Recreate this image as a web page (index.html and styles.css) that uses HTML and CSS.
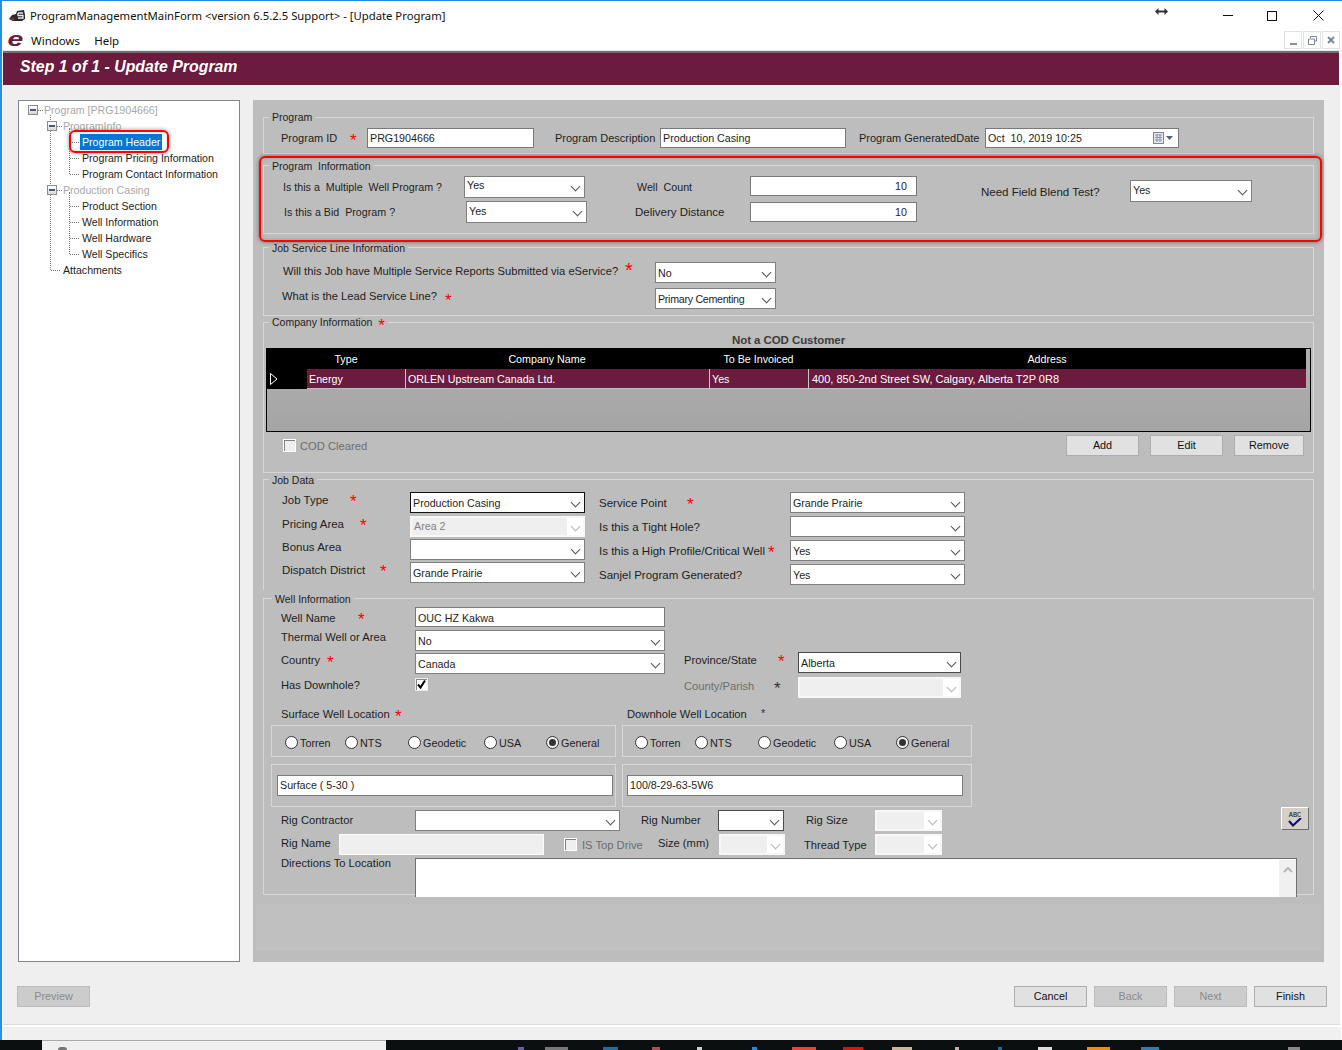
FILE: index.html
```html
<!DOCTYPE html>
<html lang="en">
<head>
<meta charset="utf-8">
<title>ProgramManagementMainForm</title>
<link rel="stylesheet" href="styles.css">
</head>
<body>
<div class="window">
  <header class="titlebar">
    <svg class="app-icon" width="17" height="12" viewBox="0 0 17 12"><path d="M0 9 L3 5 L7 4 L8 1 L15 0 L16 5 L16 9 L13 11 L4 11 Z" fill="#2b2b2b"/><path d="M9 3h5M9 3v2.500h5v2.500h-5" stroke="#e8e8e8" stroke-width="1.300" fill="none"/><circle cx="4" cy="9" r="1.800" fill="#7a2a4a"/></svg>
    <span class="title-text">ProgramManagementMainForm &lt;version 6.5.2.5 Support&gt; - [Update Program]</span>
    <svg class="resize-cursor" width="13" height="7" viewBox="0 0 13 7"><path d="M0 3.500 L3.500 0 V2.500 H9.500 V0 L13 3.500 L9.500 7 V4.500 H3.500 V7 Z" fill="#333"/></svg>
    <svg class="win-min" width="10" height="1" viewBox="0 0 10 1"><rect width="10" height="1" fill="#111"/></svg>
    <svg class="win-max" width="10" height="10" viewBox="0 0 10 10"><rect x=".5" y=".5" width="9" height="9" fill="none" stroke="#111"/></svg>
    <svg class="win-close" width="11" height="11" viewBox="0 0 11 11"><path d="M.5 .5 L10.500 10.500 M10.500 .5 L.5 10.500" stroke="#111"/></svg>
  </header>
  <nav class="menubar">
    <span class="logo-e">e</span>
    <span class="menu-item">Windows</span>
    <span class="menu-item">Help</span>
    <div class="mdi-buttons">
      <span class="mdi-btn"><svg width="7" height="2"><rect width="7" height="2" fill="#8a94a0"/></svg></span>
      <span class="mdi-btn"><svg width="9" height="9" viewBox="0 0 9 9"><path d="M2.500 2V.5h6v4.500H6.500M.5 3h6v5.500h-6z" fill="none" stroke="#7b8794"/></svg></span>
      <span class="mdi-btn"><svg width="8" height="8" viewBox="0 0 8 8"><path d="M1 1L7 7M7 1L1 7" stroke="#7b8794" stroke-width="2"/></svg></span>
    </div>
  </nav>
  <div class="step-band">Step 1 of 1 - Update Program</div>
  <main class="main">
    <div class="work">
      <aside class="tree">
        <div class="tree-row t0"><span class="exp"></span><span class="stub"></span><span class="muted">Program [PRG1904666]</span></div>
        <ul class="branch b1">
          <li>
            <div class="tree-row t1"><span class="exp"></span><span class="stub"></span><span class="muted">ProgramInfo</span></div>
            <ul class="branch b2 short">
              <li class="tree-row t2"><span class="stub long"></span><span class="selected">Program Header</span></li>
              <li class="tree-row t2"><span class="stub long"></span><span class="node">Program Pricing Information</span></li>
              <li class="tree-row t2"><span class="stub long"></span><span class="node">Program Contact Information</span></li>
            </ul>
          </li>
          <li>
            <div class="tree-row t1"><span class="exp"></span><span class="stub"></span><span class="muted">Production Casing</span></div>
            <ul class="branch b2 tall">
              <li class="tree-row t2"><span class="stub long"></span><span class="node">Product Section</span></li>
              <li class="tree-row t2"><span class="stub long"></span><span class="node">Well Information</span></li>
              <li class="tree-row t2"><span class="stub long"></span><span class="node">Well Hardware</span></li>
              <li class="tree-row t2"><span class="stub long"></span><span class="node">Well Specifics</span></li>
            </ul>
          </li>
          <li class="tree-row t1 plain"><span class="stub wide"></span><span class="node">Attachments</span></li>
        </ul>
        <div class="mark mark-tree"></div>
      </aside>

      <section class="form">
        <fieldset class="group high f-11 h-43">
          <legend>Program</legend>
          <div class="row pt-5 pl-17">
            <span class="w-69">Program ID</span><span class="star w-17">*</span>
            <div class="input w-167">PRG1904666</div>
            <span class="w-105 ml-21">Program Description</span>
            <div class="input w-186">Production Casing</div>
            <span class="w-126 ml-13">Program GeneratedDate</span>
            <div class="input date w-194"><span class="grow">Oct&nbsp; 10, 2019 10:25</span>
              <svg width="20" height="12" viewBox="0 0 20 12"><rect x=".5" y=".5" width="10" height="11" fill="#e4e8ee" stroke="#7e8a99"/><path d="M2 3h7M2 5.500h7M2 8h7M4 2v8M7 2v8" stroke="#8f99a6"/><path d="M13 4h7l-3.500 4z" fill="#50617c"/></svg>
            </div>
          </div>
        </fieldset>

        <fieldset class="group h-75 mt-5">
          <legend>Program&nbsp; Information</legend>
          <div class="row-top pt-5">
            <div>
              <div class="row pl-19">
                <span class="w-181 f-107">Is this a&nbsp; Multiple&nbsp; Well Program ?</span>
                <div class="select w-121 h-22 text-high"><span class="grow">Yes</span></div>
                <span class="w-113 ml-52 f-107">Well&nbsp; Count</span>
                <div class="input num w-167 self-start">10</div>
              </div>
              <div class="row pl-20 mt-3">
                <span class="w-182 f-107">Is this a&nbsp;Bid&nbsp; Program ?</span>
                <div class="select w-121 h-22 text-mid"><span class="grow">Yes</span></div>
                <span class="w-115 ml-48">Delivery Distance</span>
                <div class="input num w-167">10</div>
              </div>
            </div>
            <div class="row ml-64 mt-4">
              <span class="w-149 down">Need Field Blend Test?</span>
              <div class="select w-122 h-22 text-mid"><span class="grow">Yes</span></div>
            </div>
          </div>
        </fieldset>

        <fieldset class="group f-112 h-75 mt-7">
          <legend>Job Service Line Information</legend>
          <div class="row pt-9 pl-19">
            <span class="w-341 up-2">Will this Job have Multiple Service Reports Submitted via eService?</span><span class="star big w-31">*</span>
            <div class="select w-121"><span class="grow">No</span></div>
          </div>
          <div class="row pl-18 mt-5">
            <span class="w-163 up-3">What is the Lead Service Line?</span><span class="star w-210">*</span>
            <div class="select w-121"><span class="grow condensed">Primary Cementing</span></div>
          </div>
        </fieldset>

        <fieldset class="group high h-157">
          <legend>Company Information &nbsp;<span class="star legend-star">*</span></legend>
          <div class="cod-note">Not a COD Customer</div>
          <div class="grid-box">
            <div class="data-grid">
              <div class="gh corner"></div>
              <div class="gh pr-20">Type</div>
              <div class="gh pr-20">Company Name</div>
              <div class="gh">To Be Invoiced</div>
              <div class="gh pr-20">Address</div>
              <div class="row-head"><svg width="8" height="12" viewBox="0 0 8 12"><path d="M.5 .5 L7 6 L.5 11.500 Z" fill="#000" stroke="#fff"/></svg></div>
              <div class="gc">Energy</div>
              <div class="gc">ORLEN Upstream Canada Ltd.</div>
              <div class="gc">Yes</div>
              <div class="gc wide-text">400, 850-2nd Street SW, Calgary, Alberta T2P 0R8</div>
            </div>
          </div>
          <div class="row mt-3 pl-19 pr-9">
            <span class="check dim"></span>
            <span class="grey f-112 ml-4">COD Cleared</span>
            <div class="btn-row">
              <button class="btn">Add</button>
              <button class="btn">Edit</button>
              <button class="btn narrow">Remove</button>
            </div>
          </div>
        </fieldset>

        <fieldset class="group open h-117">
          <legend>Job Data</legend>
          <div class="row-top pt-7">
            <div class="col-left">
              <div class="row-top h-21"><span class="w-68 lift">Job Type</span><span class="star lift w-60">*</span><div class="select strong w-175"><span class="grow">Production Casing</span></div></div>
              <div class="row-top h-21 mt-3"><span class="w-78 lift">Pricing Area</span><span class="star lift w-50">*</span><div class="select dis w-175"><span class="grow">Area 2</span></div></div>
              <div class="row-top h-21 mt-2"><span class="w-128 lift">Bonus Area</span><div class="select w-175"><span class="grow"></span></div></div>
              <div class="row-top h-21 mt-2"><span class="w-98 lift">Dispatch District</span><span class="star lift w-30">*</span><div class="select w-175"><span class="grow">Grande Prairie</span></div></div>
            </div>
            <div class="ml-14">
              <div class="row h-21"><span class="w-88">Service Point</span><span class="star w-103">*</span><div class="select w-175"><span class="grow">Grande Prairie</span></div></div>
              <div class="row h-21 mt-3"><span class="w-191">Is this a Tight Hole?</span><div class="select w-175"><span class="grow"></span></div></div>
              <div class="row h-21 mt-3"><span class="w-169">Is this a High Profile/Critical Well</span><span class="star w-22">*</span><div class="select w-175"><span class="grow">Yes</span></div></div>
              <div class="row h-21 mt-3"><span class="w-191">Sanjel Program Generated?</span><div class="select w-175"><span class="grow">Yes</span></div></div>
            </div>
          </div>
        </fieldset>

        <fieldset class="group well f-112 h-303 mt-2">
          <legend>Well Information</legend>
          <div class="row-top">
            <div class="col-well">
              <div class="row mt-3"><span class="w-77 down">Well Name</span><span class="star w-57">*</span><div class="input low w-250">OUC HZ Kakwa</div></div>
              <div class="row-top h-21 mt-3"><span class="w-134 lift">Thermal Well or Area</span><div class="select w-250"><span class="grow">No</span></div></div>
              <div class="row-top h-21 mt-2"><span class="w-46 lift">Country</span><span class="star lift w-88">*</span><div class="select w-250"><span class="grow">Canada</span></div></div>
              <div class="row mt-4"><span class="w-134">Has Downhole?</span><span class="check checked"><svg width="11" height="11" viewBox="0 0 11 11"><path d="M2 5.500 L4.500 8.500 L9 1.500" fill="none" stroke="#000" stroke-width="2"/></svg></span></div>
            </div>
            <div class="col-prov ml-19 mt-48">
              <div class="row-top h-21"><span class="w-94 lift">Province/State</span><span class="star lift w-20">*</span><div class="select strong-soft w-163"><span class="grow">Alberta</span></div></div>
              <div class="row-top h-21 mt-4"><span class="w-90 grey county">County/Parish</span><span class="star ink county w-24">*</span><div class="select dis w-163"><span class="grow"></span></div></div>
            </div>
          </div>
          <div class="row mt-10 pl-17 h-12">
            <span class="w-114">Surface Well Location</span><span class="star w-232">*</span>
            <span class="w-134">Downhole Well Location</span><span class="star ink small">*</span>
          </div>
          <div class="row mt-5 ml-7 gap-6">
            <div class="radio-box w-345 pl-13">
              <span class="radio-item r60"><i class="radio"></i>Torren</span><span class="radio-item r63"><i class="radio"></i>NTS</span><span class="radio-item r76"><i class="radio"></i>Geodetic</span><span class="radio-item r62"><i class="radio"></i>USA</span><span class="radio-item"><i class="radio on"></i>General</span>
            </div>
            <div class="radio-box w-350 pl-12">
              <span class="radio-item r60"><i class="radio"></i>Torren</span><span class="radio-item r63"><i class="radio"></i>NTS</span><span class="radio-item r76"><i class="radio"></i>Geodetic</span><span class="radio-item r62"><i class="radio"></i>USA</span><span class="radio-item"><i class="radio on"></i>General</span>
            </div>
          </div>
          <div class="row mt-7 ml-7 gap-6">
            <div class="loc-box w-345 pl-5"><div class="input h-21 w-336">Surface ( 5-30 )</div></div>
            <div class="loc-box w-350 pl-4"><div class="input h-21 w-336">100/8-29-63-5W6</div></div>
          </div>
          <div class="row mt-3 pl-17">
            <span class="w-134 up-h">Rig Contractor</span>
            <div class="select w-205"><span class="grow"></span></div>
            <span class="w-77 ml-21 up-h">Rig Number</span>
            <div class="select strong-soft w-66"><span class="grow"></span></div>
            <span class="w-69 ml-22 up-h">Rig Size</span>
            <div class="select dis w-67"><span class="grow"></span></div>
          </div>
          <div class="row mt-3 pl-17">
            <span class="w-58 up-1">Rig Name</span>
            <div class="input off w-205 h-21"></div>
            <span class="check dim ml-20"></span>
            <span class="grey w-76 ml-5">IS Top Drive</span>
            <span class="w-61 up-1">Size (mm)</span>
            <div class="select dis w-66"><span class="grow"></span></div>
            <span class="w-71 ml-19">Thread Type</span>
            <div class="select dis w-67"><span class="grow"></span></div>
          </div>
          <div class="row-top mt-3 pl-17">
            <span class="w-134 nudge">Directions To Location</span>
            <div class="memo"><div class="scroll-up"><svg width="10" height="6" viewBox="0 0 10 6"><path d="M1 5 L5 1 L9 5" fill="none" stroke="#b8b8b8" stroke-width="2"/></svg></div></div>
          </div>
          <button class="spell"><span class="abc">ABC</span><svg width="14" height="9" viewBox="0 0 14 9"><path d="M1 3 L5 7.500 L13 0" fill="none" stroke="#0b0b6b" stroke-width="2"/></svg></button>
        </fieldset>
        <div class="form-rest"></div>
        <div class="mark mark-form"></div>
      </section>
    </div>
    <footer class="wizard-bar">
      <button class="btn off">Preview</button>
      <button class="btn push">Cancel</button>
      <button class="btn off">Back</button>
      <button class="btn off">Next</button>
      <button class="btn">Finish</button>
    </footer>
  </main>
  <div class="status-strip"></div>
  <div class="taskbar">
    <div class="task-app"><span class="ti ti-a"></span></div>
    <div class="tray">
      <span class="ti ti-1"></span><span class="ti ti-2"></span><span class="ti ti-3"></span><span class="ti ti-4"></span><span class="ti ti-5"></span><span class="ti ti-6"></span><span class="ti ti-7"></span><span class="ti ti-8"></span><span class="ti ti-9"></span><span class="ti ti-10"></span><span class="ti ti-11"></span><span class="ti ti-12"></span><span class="ti ti-14"></span><span class="ti ti-15"></span><span class="ti ti-13"></span>
    </div>
  </div>
</div>
</body>
</html>
```

FILE: styles.css
```css
* { box-sizing: border-box; }
html, body { margin: 0; padding: 0; height: 1050px; overflow: hidden; }
body { font-family: "Liberation Sans", Arial, sans-serif; font-size: 11.5px; color: #1e1e1e; background: #fff; }
ul { list-style: none; margin: 0; padding: 0; }
button { font: inherit; }

.window { height: 1050px; display: flex; flex-direction: column; border-top: 1px solid #1e88e5; border-left: 2px solid #2a8fe0; background: #fff; }

/* title + menu */
.titlebar { height: 29px; flex: none; display: flex; align-items: center; padding-left: 7px; }
.app-icon { flex: none; }
.title-text { margin-left: 4px; font-family: "Noto Sans", sans-serif; font-size: 11.3px; color: #111; white-space: nowrap; }
.resize-cursor { margin-left: auto; margin-right: 55px; margin-top: -9px; }
.win-min { margin-right: 34px; }
.win-max { margin-right: 36px; }
.win-close { margin-right: 18px; }

.menubar { height: 21px; flex: none; display: flex; align-items: center; padding-left: 7px; border-bottom: 1px solid #e8e8e8; }
.logo-e { width: 15px; font: italic bold 21px/18px "Liberation Sans", sans-serif; color: #6a1b3e; transform: scaleX(1.35); margin-top: -2px; margin-left: 1px; margin-right: -1px; }
.menu-item { font-family: "Noto Sans", sans-serif; font-size: 11.5px; margin-left: 7px; margin-right: 7px; color: #111; }
.mdi-buttons { margin-left: auto; margin-right: 2px; display: flex; gap: 1px; }
.mdi-btn { width: 18px; height: 18px; border: 1px solid #e2e2e2; display: flex; align-items: center; justify-content: center; }
.mdi-btn:first-child svg { margin-top: 8px; }

.step-band { flex: none; height: 34px; margin-left: 1px; margin-right: 3px; border-top: 2px solid #707070; background: #6a1b3e; color: #fff; font: italic bold 15.85px/28px "Liberation Sans", sans-serif; padding-left: 17px; }

.main { flex: 1; min-height: 0; margin-left: 1px; margin-right: 2px; background: #efefef; padding: 15px 13px 0 15px; border-bottom: 1px solid #dcdcdc; }
.work { display: flex; gap: 13px; height: 862px; margin-right: 3px; }

/* tree */
.tree { width: 222px; flex: none; border: 1px solid #828790; background: #fff; position: relative; padding-top: 1px; font-size: 10.6px; }
.tree-row { height: 16px; display: flex; align-items: center; white-space: nowrap; position: relative; }
.t0 { padding-left: 9px; }
.t1 { padding-left: 28px; }
.t2 { padding-left: 51px; }
.t1.plain { padding-left: 32px; }
.exp { width: 10px; height: 10px; border: 1px solid #8c8c8c; background: linear-gradient(#fff, #d8d8d8); position: relative; flex: none; }
.exp::after { content: ""; position: absolute; left: 1px; right: 1px; top: 3px; height: 2px; background: #4a5a7a; }
.stub { width: 5px; border-top: 1px dotted #777; margin-right: 1px; flex: none; }
.stub.long { width: 9px; margin-right: 1px; }
.stub.wide { width: 9px; margin-right: 1px; }
.muted { color: #a9a9a9; }
.node { padding: 0 2px; line-height: 16px; }
.selected { background: #0078d7; color: #fff; padding: 0 2px; line-height: 16px; }
.branch { position: relative; }
.branch::before { content: ""; position: absolute; border-left: 1px dotted #777; }
.b1::before { left: 31px; top: -3px; height: 155px; }
.b2::before { left: 50px; top: -6px; }
.short::before { height: 46px; }
.tall::before { height: 62px; }

.mark { position: absolute; border: 2px solid #f00; border-radius: 6px; box-shadow: 0 0 4px rgba(0,0,0,.45), inset 0 0 4px rgba(0,0,0,.18); pointer-events: none; }
.mark-tree { left: 50px; top: 29px; width: 100px; height: 23px; }
.mark-form { left: 6px; top: 56px; width: 1063px; height: 86px; }

/* form */
.form { flex: 1; min-width: 0; background: #bdbdbd; padding: 11px 10px 0; position: relative; }
.form-rest { margin: 9px -7px 0; height: 47px; background: #c0c0c0; }
.group { margin: 0; padding: 0; min-width: 0; border: 1px solid #d8d8d8; position: relative; display: block; }
.group > legend { margin-left: 5px; padding: 0 3px; line-height: 14px; height: 12px; white-space: nowrap; font-size: 10.5px; }
.group.high > legend { line-height: 12px; }
.group.well > legend { margin-left: 8px; }
.group.open { border-bottom: 0; }

.row, .row-top { display: flex; white-space: nowrap; }
.row { align-items: center; }
.row-top { align-items: flex-start; }
.grow { flex: 1; min-width: 0; overflow: hidden; }
.self-start { align-self: flex-start; }
.lift { line-height: 14px; }
.col-left .lift, .col-prov .lift { padding-top: 1px; }
.county { margin-top: 2px; line-height: 14px; }
.nudge { line-height: 10px; }
.down { margin-top: 2px; }
.up-h { margin-bottom: 2px; }
.up-1 { margin-bottom: 3px; }
.up-2 { margin-top: -4px; }
.up-3 { margin-top: -6px; }
.f-11 { font-size: 11px; }
.f-107 { font-size: 10.7px; }
.f-112 { font-size: 11.2px; }

.star { color: #f00; font: normal 17px/12px "Liberation Sans", sans-serif; padding-top: 5px; flex: none; }
.col-left .star.lift, .col-well .star.lift, .col-prov .star.lift, .star.county { line-height: 14px; padding-top: 3px; }
.star.big { font-size: 20px; padding-top: 0; margin-top: -6px; padding-left: 1px; }
.star.ink { color: #333; }
.star.small { font-size: 11px; padding-top: 0; margin-top: -3px; }
.legend-star { padding-top: 0; vertical-align: -5px; }
.grey { color: #6d6d6d; }
.condensed { letter-spacing: -.3px; }

.input { height: 20px; background: #fff; border: 1px solid #7a7a7a; padding: 0 2px; line-height: 18px; flex: none; overflow: hidden; font-size: 10.7px; }
.input.low { line-height: 20px; }
.input.num { text-align: right; padding-right: 9px; }
.input.off { background: #efefef; border-color: #fafafa; }
.date { display: flex; align-items: center; padding-right: 5px; }
.select { height: 21px; background: #fff; border: 1px solid #7f7f7f; padding: 0 18px 0 2px; display: flex; align-items: center; position: relative; flex: none; font-size: 10.7px; }
.select::after { content: ""; position: absolute; right: 5px; top: 50%; width: 6px; height: 6px; border-right: 1px solid #555; border-bottom: 1px solid #555; transform: translateY(-4px) rotate(45deg); }
.select.text-high .grow { margin-top: -4px; }
.select.text-mid .grow { margin-top: -2px; }
.select.strong { border-color: #111; }
.select.strong-soft { border-color: #4a4a4a; }
.select.dis { border: 2px solid #f7f7f7; padding: 0 16px 0 2px; color: #7f7f7f; background: #fff; }
.select.dis .grow { background: #efefef; align-self: stretch; margin: 0 0 0 -2px; padding-left: 2px; line-height: 17px; }
.select.dis::after { border-color: #b5b5b5; right: 4px; }

.check { width: 13px; height: 13px; border: 1px solid #fff; background: #efefef; box-shadow: inset 1px 1px 0 #7f7f7f; flex: none; display: block; }
.check.checked { background: #fff; border: 1px solid #eee; box-shadow: inset 1px 1px 0 #888; padding: 0; }
.check svg { display: block; }

/* company grid */
.cod-note { text-align: center; font-weight: bold; line-height: 12px; height: 12px; margin-top: 6px; margin-bottom: 2px; color: #3c3c3c; font-size: 11.5px; letter-spacing: -.07px; }
.grid-box { margin-left: 2px; width: 1045px; height: 84px; border: 1px solid #000; background: linear-gradient(#b0b0b0, #a4a4a4); padding-right: 4px; }
.data-grid { display: grid; grid-template-columns: 40px 98px 304px 99px 1fr; grid-template-rows: 20px 20px; font-size: 10.7px; }
.gh { background: #000; color: #fff; text-align: center; line-height: 20px; }
.pr-20 { padding-right: 20px; }
.row-head { background: #000; display: flex; align-items: center; padding-left: 3px; }
.gc { background: #6a1b3e; color: #fff; padding-left: 2px; line-height: 20px; border-left: 1px solid #c8c8c8; border-bottom: 1px solid #bdbdbd; }
.gc.wide-text { font-size: 11px; padding-left: 3px; }
.row-head + .gc { border-left: 0; }
.btn-row { margin-left: auto; display: flex; gap: 11px; }
.btn { width: 73px; height: 21px; background: #e1e1e1; border: 1px solid #adadad; color: #111; padding: 0; line-height: 19px; font-size: 10.8px; }
.btn.narrow { width: 70px; }
.btn.off { background: #cccccc; border-color: #bcbcbc; color: #8a8a8a; }

.col-left { margin-left: 18px; }
.col-well { margin-left: 17px; width: 384px; }

/* radios */
.radio-box { height: 32px; border: 1px solid #d8d8d8; display: flex; align-items: center; flex: none; padding-top: 3px; font-size: 10.8px; }
.radio-item { display: inline-flex; align-items: center; gap: 2px; flex: none; }
.r60 { width: 60px; }
.r63 { width: 63px; }
.r76 { width: 76px; }
.r62 { width: 62px; }
.radio { width: 13px; height: 13px; border: 1px solid #333; border-radius: 50%; background: #fff; flex: none; position: relative; display: block; }
.radio.on { background: #f0f0f0; }
.radio.on::after { content: ""; position: absolute; inset: 2px; border-radius: 50%; background: #333; }
.loc-box { height: 43px; border: 1px solid #d8d8d8; padding-top: 10px; flex: none; }

.memo { width: 882px; height: 39px; background: #fff; border: 1px solid #6f6f6f; border-bottom: 0; display: flex; justify-content: flex-end; position: relative; }
.scroll-up { width: 17px; background: #f0f0f0; display: flex; justify-content: center; padding-top: 7px; margin-top: 1px; }
.spell { position: absolute; right: 4px; top: 203px; width: 28px; height: 23px; padding: 0; background: #d4d0c8; border: 1px solid; border-color: #fff #6f6f6f #6f6f6f #fff; display: flex; flex-direction: column; align-items: center; overflow: hidden; }
.abc { font: 7px/8px "Liberation Mono", monospace; color: #111; margin-top: 3px; }
.spell svg { margin-top: -1px; }

/* wizard */
.wizard-bar { display: flex; gap: 7px; margin-top: 24px; margin-left: -1px; }
.wizard-bar .push { margin-left: auto; }

.status-strip { height: 14px; flex: none; margin-top: 1px; background: #f0f0f0; margin-right: 1px; border-top: 1px solid #fff; }

/* taskbar */
.taskbar { height: 10px; flex: none; margin-left: -2px; background: #0b0f10; display: flex; position: relative; }
.task-app { width: 344px; margin-left: 42px; background: #f0f0f0; border-top: 1px solid #aaa; flex: none; padding-left: 16px; }
.tray { flex: 1; display: flex; align-items: flex-end; height: 10px; }
.ti { display: block; height: 3px; flex: none; }
.ti-a { width: 9px; margin-top: 6px; background: #777; border-radius: 4px 4px 0 0; }
.ti-1 { width: 6px; margin-left: 132px; background: #6a5ab0; }
.ti-2 { width: 23px; margin-left: 21px; background: #777; }
.ti-3 { width: 15px; margin-left: 35px; background: #1c6ea4; }
.ti-4 { width: 8px; margin-left: 34px; background: #b54a4a; }
.ti-5 { width: 5px; margin-left: 37px; background: #ccc; }
.ti-6 { width: 5px; margin-left: 50px; background: #1e88e5; }
.ti-7 { width: 24px; margin-left: 35px; background: #ea4335; }
.ti-8 { width: 20px; margin-left: 27px; background: #e01010; }
.ti-9 { width: 20px; margin-left: 29px; background: #c9b98a; }
.ti-10 { width: 4px; margin-left: 43px; background: #caa; }
.ti-11 { width: 4px; margin-left: 39px; background: #1c6ea4; }
.ti-12 { width: 14px; margin-left: 36px; background: #ddd; }
.ti-14 { width: 23px; margin-left: 35px; background: #f28c00; }
.ti-15 { width: 18px; margin-left: 31px; background: #2b80b0; }
.ti-13 { width: 12px; margin-left: 129px; background: #888; }

/* spacing + width helpers */
.h-12 { height: 12px; } .h-21 { height: 21px; } .h-22 { height: 22px; }
.h-43 { height: 43px; } .h-75 { height: 75px; } .h-117 { height: 117px; } .h-157 { height: 157px; } .h-303 { height: 303px; }
.pt-5 { padding-top: 5px; } .pt-7 { padding-top: 7px; } .pt-9 { padding-top: 9px; }
.pl-4 { padding-left: 4px; } .pl-5 { padding-left: 5px; } .pl-12 { padding-left: 12px; } .pl-13 { padding-left: 13px; }
.pl-17 { padding-left: 17px; } .pl-18 { padding-left: 18px; } .pl-19 { padding-left: 19px; } .pl-20 { padding-left: 20px; } .pr-9 { padding-right: 9px; }
.mt-2 { margin-top: 2px; } .mt-3 { margin-top: 3px; } .mt-4 { margin-top: 4px; } .mt-5 { margin-top: 5px; } .mt-7 { margin-top: 7px; } .mt-10 { margin-top: 10px; } .mt-48 { margin-top: 48px; }
.ml-4 { margin-left: 4px; } .ml-5 { margin-left: 5px; } .ml-7 { margin-left: 7px; } .ml-13 { margin-left: 13px; } .ml-14 { margin-left: 14px; } .ml-19 { margin-left: 19px; } .ml-20 { margin-left: 20px; } .ml-21 { margin-left: 21px; } .ml-22 { margin-left: 22px; } .ml-48 { margin-left: 48px; } .ml-52 { margin-left: 52px; } .ml-64 { margin-left: 64px; }
.gap-6 { gap: 6px; }
.w-17 { width: 17px; } .w-20 { width: 20px; } .w-22 { width: 22px; } .w-24 { width: 24px; } .w-30 { width: 30px; } .w-31 { width: 31px; } .w-46 { width: 46px; } .w-50 { width: 50px; } .w-57 { width: 57px; } .w-58 { width: 58px; } .w-60 { width: 60px; } .w-61 { width: 61px; } .w-66 { width: 66px; } .w-67 { width: 67px; } .w-68 { width: 68px; } .w-69 { width: 69px; } .w-71 { width: 71px; } .w-76 { width: 76px; } .w-77 { width: 77px; } .w-78 { width: 78px; } .w-88 { width: 88px; } .w-90 { width: 90px; } .w-94 { width: 94px; } .w-98 { width: 98px; } .w-103 { width: 103px; } .w-105 { width: 105px; } .w-113 { width: 113px; } .w-114 { width: 114px; } .w-115 { width: 115px; } .w-121 { width: 121px; } .w-122 { width: 122px; } .w-126 { width: 126px; } .w-128 { width: 128px; } .w-134 { width: 134px; } .w-149 { width: 149px; } .w-163 { width: 163px; } .w-167 { width: 167px; } .w-169 { width: 169px; } .w-175 { width: 175px; } .w-181 { width: 181px; } .w-182 { width: 182px; } .w-186 { width: 186px; } .w-191 { width: 191px; } .w-194 { width: 194px; } .w-205 { width: 205px; } .w-210 { width: 210px; } .w-232 { width: 232px; } .w-250 { width: 250px; } .w-336 { width: 336px; } .w-341 { width: 341px; } .w-345 { width: 345px; } .w-350 { width: 350px; }
.row > span[class*="w-"], .row-top > span[class*="w-"] { flex: none; }
```
